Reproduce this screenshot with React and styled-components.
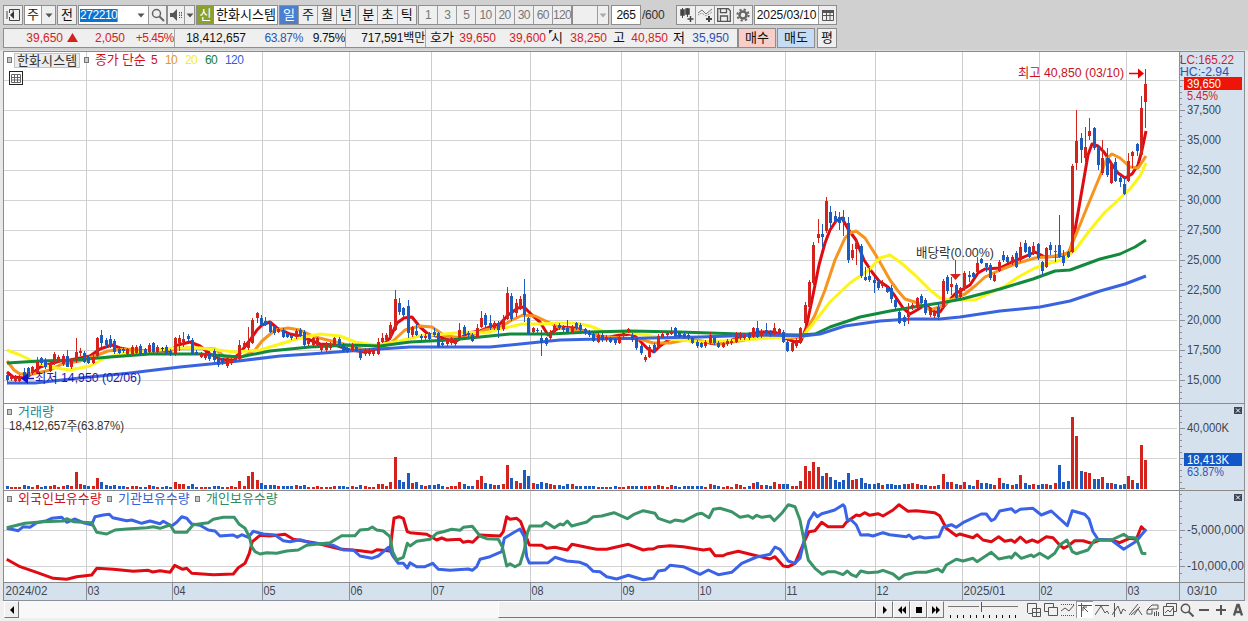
import React from 'react';
import styled, { createGlobalStyle } from 'styled-components';

const Global = createGlobalStyle`
  * { box-sizing: border-box; }
  body { margin: 0; background: #f0f0f0; font-family: 'Liberation Sans', 'Noto Sans CJK KR', sans-serif; font-size: 12px; color: #111; }
  button { font: inherit; color: inherit; padding: 0; }
`;

const RED = '#d4221c';
const BLUE = '#1d5cbe';

/* ---------- price data ---------- */

// Body range in thirds of a pixel, optionally followed by the wick range.
const CANDLES = [
  [280, 'b285-300 r290-297 r290-302 r290-302 b275-300:265-300 b265-290 r262-280 r247-280:232-280 b235-250 b240-262 r248-272 r222-250 r230-245 r228-252 b228-260:210-262 r240-262 r217-240:175-250 r212-220:203-228 b218-245 b230-248 r230-248 r175-228 b165-190:150-200 b180-195 b178-200:165-205 b183-215:178-222 b207-218 b207-213 r208-222 r200-222 r200-218 b198-222 b208-220 r195-215 b190-215 r200-215 k205-208 b200-220 b213-222 r175-222 r175-190:165-212 r178-185:157-200 b168-178 b180-220 b215-220 r222-230 r222-235 b218-238 b212-240 b235-255 b240-250 r235-258 r240-250 r230-240 r195-238:180-242 r188-200 r182-205:142-210 r120-188 r100-115:95-130 b115-135:105-137 b122-135:112-138 b128-155 b140-160 r148-155 b150-170 b160-170 b165-175 r152-172 b150-165 b155-195 r182-193'],
  [270, 'r205-225 r205-225 r225-240 r222-240 r222-235 r205-222 b207-225 b225-242 b235-245 r225-240 b230-242 b242-265 r240-252 r240-252 r240-252 r215-252:203-255 r205-215:190-220 r195-210 r165-205:155-210 r88-180:60-184 b100-125:85-135 b115-135 b108-190:90-205 r172-195 b182-195:160-198 b198-205 r198-205 b190-208 b185-195:175-200 b190-230 b218-225 r208-222 r205-220 r208-222 r180-205:158-210 b170-192 b188-195 b195-212 r175-200:163-204 r145-170:123-174 b135-165 b160-175:135-180 r160-175:153-180 b158-180:152-205 r150-178:135-182 r70-148:52-150 b78-148:68-154 r100-130:88-140 r88-115:78-120 b72-135:27-155 b145-190 r175-185 b180-184 b205-220:180-258 b205-222 r185-205 r168-185 b165-175 b170-180 b175-185:150-190 r170-185 b160-175 b165-180 b178-190 b185-195 b192-212 r195-215'],
  [180, 'b465-480 r470-480 b475-485 b478-490 r470-488 r458-468 r448-455 b465-480 b475-505 b497-520 r530-540 r500-530 b495-515 r467-500 r462-470 r458-466 r452-462:440-466 b445-467 b458-470 b462-470 b465-475 b475-488 b485-498 b490-500 r485-498 r465-490:455-494 b475-490 b488-500 r490-500 r482-492 r482-490 r460-485 r460-475 r465-475 b460-475 r445-470 b445-470:423-474 r452-468 b450-460:430-468 b455-465 r445-462:428-466 r448-460 b455-485 b485-512 r490-512 r480-498 r445-488 r375-428:365-440 r305-380 r195-310:185-315 r162-175:118-190 b162-172:132-200 r62-152:52-158 b95-130:78-140 b108-125:92-130 b112-128:95-150 b112-125:90-168 b128-240:110-250 r210-235:192-240 r188-208:180-255 b198-288 b290-300:262-302 b288-300:265-305 b300-308:290-338 b305-325 r305-318 b320-335 b325-358:315-370 b360-380:350-390 b395-428 b410-425:406-437 r395-412:370-433 r375-385 r355-380 b348-368 b360-400 r385-405 r395-408'],
  [90, 'b650-680:637-690 r573-650 b560-602:556-612 r582-592:560-615 b585-625 r595-620 r548-598 b555-562:542-575 b550-562 r520-545:500-550 b508-518 b520-530:518-545 b525-565 r555-572 r515-542 b495-510:482-515 b500-515 r500-520 b488-530 r470-510:455-516 b460-485:450-490 b472-500 r467-490:455-496 b463-505 b515-542:512-555 r475-530 b465-480:455-495 r483-487:465-515 b465-500:375-505 b498-518:480-528 b487-500 r228-485 r153-218:60-240 b143-180:128-220 r170-205:110-216 r122-137:85-150 b115-175 b172-225:168-240 r205-250:150-255 b205-255:175-262 r220-278 b215-272:205-276 b265-275:255-290 b283-312:262-316 r213-273:190-276 r187-197:184-235 b163-182:160-198 r53-195:18-200 r-19-36:-63-114'],
].flatMap(([base, list]) =>
  list.split(' ').map((item) => {
    const [, kind, a, b, hi, lo] = item.match(/^([rbk])(-?\d+)-(\d+)(?::(-?\d+)-(\d+))?$/);
    const at = (v) => Math.round(base + v / 3);
    return {
      color: kind === 'r' ? RED : kind === 'b' ? BLUE : '#333',
      top: at(+a), bottom: at(+b),
      high: at(hi === undefined ? +a - 5 : +hi), low: at(lo === undefined ? +b + 5 : +lo),
    };
  })
);

const VOLUMES = [
  3,2,2,2,4,3,2,4,2,3,3,4,2,3,4,3,17,5,4,3,3,11,7,4,3,4,3,3,2,3,3,2,2,4,3,2,2,3,2,7,5,5,3,5,2,2,2,2,3,3,2,2,3,2,8,3,13,17,9,6,
  4,4,4,3,3,3,3,4,3,4,2,2,3,2,2,2,3,3,3,2,3,2,4,3,2,2,5,5,3,7,32,9,7,16,6,7,4,3,4,4,5,3,2,3,3,7,5,3,3,9,13,6,5,4,4,5,24,11,8,6,
  19,13,6,5,7,6,5,4,4,3,5,5,3,3,3,3,3,2,2,2,2,3,2,2,3,3,3,3,3,3,3,4,3,2,4,3,2,3,3,3,3,3,2,5,4,3,2,3,2,5,4,2,3,6,7,4,4,3,7,5,
  5,5,3,3,8,23,18,27,22,13,16,12,9,7,9,16,9,10,11,6,5,5,6,4,5,5,4,4,5,5,6,5,4,4,3,3,4,15,7,7,5,4,7,4,3,9,6,6,5,4,11,6,5,4,5,14,
  6,4,5,4,5,5,4,6,24,7,8,72,53,18,17,16,10,10,12,6,6,5,4,5,13,9,6,44,29,
];

const barX = (i) => Math.round(6.5 + i * 4.314);

const AVERAGES = [
  ['#e00b12', '7,372 13,377 25,378 33,373 40,367 50,364 60,361 70,360 80,358 90,356 100,349 112,345 120,348 130,350 150,351 170,351 178,345 190,342 200,346 210,354 220,359 232,360 240,353 250,340 257,330 262,325 270,322 277,328 290,334 300,336 310,340 320,344 335,345 350,350 365,352 380,348 390,338 397,323 404,318 412,317 420,327 428,334 440,337 455,342 468,333 480,331 490,327 500,324 508,315 518,308 524,307 532,315 540,322 548,335 560,327 575,328 590,333 605,338 620,335 633,334 641,342 648,349 654,352 660,346 670,339 680,336 692,341 705,342 715,344 730,341 745,335 760,332 775,332 785,338 795,342 801,341 806,328 812,300 819,265 825,243 830,230 836,221 842,218 848,229 856,240 864,260 872,272 879,281 888,287 895,296 903,308 910,314 917,310 925,305 935,312 940,312 945,305 955,294 970,285 978,273 985,269 1000,268 1012,262 1024,257 1035,252 1045,257 1060,256 1070,252 1075,230 1083,184 1088,155 1092,144 1098,146 1104,152 1111,163 1118,173 1125,178 1132,174 1138,165 1142,150 1146,131'],
  ['#f7941d', '7,361 14,370 20,374 33,374 50,370 62,364 80,361 95,356 108,351 125,349 150,351 175,349 190,348 215,349 225,357 240,358 255,350 262,341 275,330 288,328 300,330 315,337 340,343 365,350 382,348 393,341 405,330 420,326 432,327 445,336 465,338 485,330 500,327 512,320 523,315 535,316 548,322 560,328 585,331 600,336 620,338 640,339 653,343 670,343 690,339 720,344 745,340 765,335 790,338 803,337 815,315 825,290 835,260 845,238 850,233 856,231 865,238 877,257 890,280 898,291 905,299 918,303 930,310 942,306 955,298 965,294 975,286 985,277 1000,270 1015,264 1035,258 1055,256 1068,253 1075,237 1088,205 1100,176 1107,158 1112,154 1120,158 1130,167 1138,168 1146,156'],
  ['#fdf51a', '7,350 20,355 35,362 50,367 70,370 90,366 105,358 120,354 150,351 175,348 200,348 235,352 260,350 280,344 300,338 320,334 340,336 355,342 375,345 395,342 420,336 445,334 465,332 485,333 505,328 522,324 540,324 560,323 575,323 590,326 605,332 625,332 645,335 670,339 700,342 740,340 770,338 803,336 812,325 830,302 850,283 870,269 880,258 890,255 900,262 915,275 930,290 940,298 950,300 975,300 990,293 1005,286 1020,276 1035,268 1050,263 1065,259 1075,250 1090,230 1105,212 1115,203 1130,189 1140,176 1146,163'],
  ['#118a3c', '7,363 40,361 75,360 110,357 150,354 200,354 240,357 270,351 310,347 350,345 380,346 410,342 450,340 490,336 510,334 550,334 590,332 630,331 680,332 740,334 800,335 815,334 830,327 860,317 890,311 920,306 940,303 962,299 1000,289 1033,279 1055,271 1070,270 1100,259 1120,254 1135,247 1146,240'],
  ['#3a63e0', '7,383 35,383 80,378 130,373 180,367 230,362 280,356 310,354 350,351 410,347 490,347 530,343 560,340 600,339 700,337 760,335 803,336 820,334 845,326 880,321 910,319 940,319 960,317 1000,311 1040,307 1070,301 1100,291 1125,284 1146,276'],
];

// Investor holdings: three spans per series, each in thirds of a pixel from its own left edge.
const SPANS = [0, 410, 828];
const HOLDINGS = [
  ['#e00b12', [
    '20,478 60,500 110,517 160,535 200,538 230,530 275,525 290,505 340,508 400,514 445,511 458,516 480,512 510,517 524,496 548,508 560,505 575,520 640,524 700,522 715,503 735,490 748,460 757,425 780,406 810,408 855,403 880,418 950,430 1020,447 1080,452 1115,457 1132,449 1170,453 1175,410 1182,355 1197,350 1210,355 1222,395',
    '0,398 50,403 80,420 95,414 110,420 150,418 160,427 175,424 188,427 210,405 270,408 280,395 290,350 300,358 320,355 332,365 345,400 358,435 395,436 410,445 435,442 472,450 486,433 540,444 560,448 590,448 655,433 700,450 715,447 730,447 745,440 780,437 820,440 880,450 900,447 915,467 940,467 950,462 985,454 1030,465 1080,477 1095,470 1120,498 1135,500 1155,490 1170,455 1185,420 1197,395 1215,392 1235,367',
    '0,380 45,380 55,367 85,345 95,347 110,338 125,346 150,341 165,348 195,330 213,314 240,334 265,332 320,338 335,347 355,385 385,407 395,402 435,413 447,404 465,420 490,425 512,410 530,424 550,420 560,427 577,411 595,427 613,420 630,427 655,410 675,413 695,435 707,445 720,438 740,422 765,422 790,430 815,420 850,420 875,428 905,415 925,418 940,380 952,392']],
  ['#3a63e8', [
    '20,385 55,392 70,380 90,382 110,368 140,362 155,355 185,352 200,367 225,357 250,368 275,374 285,350 310,345 328,343 338,353 380,362 395,360 425,370 450,363 480,371 490,364 515,378 530,367 545,350 560,355 575,372 600,376 625,390 645,393 660,408 700,405 712,412 725,404 745,412 760,394 790,402 825,405 850,422 870,425 900,419 930,428 1000,436 1030,450 1060,450 1080,468 1115,475 1135,468 1165,442 1180,470 1195,490 1210,490 1222,504',
    '0,488 20,500 45,500 68,490 85,508 120,511 175,507 187,511 200,500 210,478 240,470 275,455 283,415 310,398 330,387 343,410 350,470 358,489 415,488 435,472 470,483 510,487 530,495 550,514 570,515 590,530 620,537 655,526 700,539 730,535 745,513 765,510 780,496 820,500 870,523 895,510 925,524 965,517 995,490 1040,471 1080,463 1095,441 1110,448 1135,483 1155,490 1170,475 1185,410 1197,362 1212,338 1222,350 1235,341',
    '0,336 20,330 45,314 50,320 58,360 70,360 85,375 98,405 120,404 135,408 165,398 185,404 235,410 243,405 255,416 275,410 290,414 333,410 345,382 370,374 385,382 405,368 460,342 475,342 490,362 500,357 515,333 550,326 562,337 577,328 615,325 640,345 670,333 718,377 733,332 770,343 783,357 795,395 810,418 850,420 887,448 925,424 940,405 955,388']],
  ['#3a9467', [
    '20,383 75,370 130,365 190,363 200,356 220,365 275,368 290,397 320,402 345,390 380,387 440,383 460,380 480,385 510,375 524,397 560,397 580,374 625,368 640,358 670,352 703,352 718,373 735,385 748,410 755,440 765,455 780,462 800,458 830,460 860,453 895,450 920,436 990,428 1025,407 1065,407 1080,390 1105,388 1117,381 1130,390 1150,393 1170,410 1178,455 1190,480 1210,472 1222,430',
    '0,438 20,424 60,418 80,400 100,395 125,388 150,391 160,382 187,379 210,408 230,416 265,418 277,440 290,498 300,491 315,500 330,492 343,450 352,400 360,378 395,378 408,367 433,383 450,372 460,375 472,363 485,378 530,366 550,350 575,348 612,338 652,356 670,344 700,332 735,340 745,355 780,367 795,360 820,364 860,343 875,340 897,353 910,328 930,325 965,335 990,352 1015,347 1028,355 1040,346 1055,352 1080,348 1093,362 1115,340 1135,314 1155,320 1170,360 1180,410 1195,480 1215,505 1237,523',
    '0,515 20,515 45,524 58,513 70,524 85,530 98,513 120,518 150,516 165,511 195,522 213,537 230,524 265,517 295,517 330,507 343,516 355,495 385,478 405,483 435,475 447,485 490,457 512,477 545,470 550,474 562,459 580,475 610,465 617,470 635,460 660,475 680,460 695,435 717,420 733,455 745,461 780,450 800,420 850,420 887,403 900,412 925,414 935,440 942,460 955,461']],
].map(([color, spans]) => [color, spans.map((s, k) => s.split(' ').map((p) => {
  const [x, y] = p.split(',').map(Number);
  return `${(SPANS[k] + x / 3).toFixed(1)},${(400 + y / 3).toFixed(1)}`;
}).join(' ')).join(' ')]);

const MONTHS = [
  [4, '2024/02', 42], [86, '03', 12], [172, '04', 12], [262, '05', 12], [349, '06', 12], [431, '07', 12], [530, '08', 12], [621, '09', 12],
  [698, '10', 12], [785, '11', 11], [875, '12', 12], [962, '2025/01', 42], [1039, '02', 12], [1126, '03', 12],
];
const AXIS_X = 1179;

/* ---------- layout ---------- */

const Window = styled.div`
  width: 1248px; height: 621px; display: flex; flex-direction: column; overflow: hidden;
  background: #e8e8e8; padding: 0 3px;
`;
const Header = styled.header`
  height: 51px; flex: none; margin: 0 -3px; padding: 5px 3px 0; background: #d0d0d0; border-bottom: 1px solid #dedede;
`;
const ToolRow = styled.div`
  display: flex; align-items: center; height: 20px; white-space: nowrap;
`;
const Group = styled.div`
  display: flex; height: 20px; width: ${(p) => p.$w}px; margin-right: ${(p) => p.$gap || 0}px;
  border: 1px solid #8e8e8e; background: ${(p) => p.$bg || '#efefef'}; align-items: stretch;
`;
const Cell = styled.button`
  display: flex; align-items: center; justify-content: center; flex: ${(p) => (p.$w ? 'none' : 1)}; width: ${(p) => (p.$w ? p.$w + 'px' : 'auto')};
  min-width: 0; border: 0; background: ${(p) => p.$bg || 'transparent'}; color: ${(p) => p.$color || '#111'};
  font-size: ${(p) => p.$size || 13}px; letter-spacing: ${(p) => p.$ls || 0}px; line-height: 18px;
  & + & { border-left: 1px solid #9b9b9b; }
`;
const Selected = styled.span`background: #0a74d0; color: #fff; letter-spacing: -0.45px; height: 13px; line-height: 13px; border-right: 1px solid #e8883a;`;
const CodeInput = styled.div`
  display: flex; align-items: center; flex: 1; background: #fff; padding-left: 1px; font-size: 12px;
`;
const StockName = styled.div`
  display: flex; align-items: center; flex: 1; background: #fff; padding-left: 2px; font-size: 13px; letter-spacing: 0.05px; overflow: hidden; line-height: 18px;
`;
const Plain = styled.span`width: ${(p) => p.$w}px; padding-left: 1px; font-size: 12px; letter-spacing: -0.25px; color: #333;`;

const QuoteRow = styled(ToolRow)`margin-top: 3px;`;
const Quotes = styled.div`
  display: flex; align-items: center; width: 735px; height: 20px; border: 1px solid #8e8e8e; background: #efefef; line-height: 18px;
`;
const Quote = styled.span`
  position: relative; width: ${(p) => p.$w}px; flex: none; text-align: right; color: ${(p) => p.$color || '#111'}; font-size: ${(p) => (p.$ko ? 13 : 12)}px;
  letter-spacing: ${(p) => p.$ls ?? 0}px; border-left: ${(p) => (p.$rule ? '1px solid #aaa' : 0)}; height: 18px;
`;
const Corner = styled.i`
  position: absolute; left: 3px; top: 1px; border: 2px solid; border-color: #333 transparent transparent #333;
`;

const Chart = styled.div`
  display: flex; flex-direction: column; height: 550px; flex: none; background: #fff; border-top: 1px solid #8a8a8a; border-left: 1px solid #8a8a8a;
`;
const Pane = styled.div`position: relative; height: ${(p) => p.$h}px; flex: none; svg { display: block; }`;
const Legend = styled.div`
  position: absolute; left: 3px; top: ${(p) => p.$top}px; display: flex; align-items: center; height: 16px; font-size: 13px; line-height: 16px; white-space: pre;
`;
const Handle = styled.i`width: 5px; height: 6px; border: 1px solid #777; background: #c9c9c9; margin-right: ${(p) => p.$gap}px;`;
const Label = styled.span`
  color: ${(p) => p.$color}; width: ${(p) => p.$w}px; letter-spacing: ${(p) => p.$ls || 0}px; font-size: ${(p) => (p.$num ? 12 : 13)}px;
`;
const NameTag = styled(Label)`background: #ececec; border: 1px solid #c4c4c4; height: 15px; line-height: 13px; margin-right: 4px; padding-left: 2px;`;
const GridButton = styled.button`
  position: absolute; left: 5px; top: 19px; width: 14px; height: 14px; border: 1px solid #222; background: #fff; display: flex; align-items: center; justify-content: center;
`;
const CloseMark = styled.button`
  position: absolute; right: 3px; top: 3px; width: 8px; height: 7px; border: 0; background: #3d4654; display: flex; align-items: center; justify-content: center;
`;

const Footer = styled.div`display: flex; flex: none; height: 20px; margin: 0 -3px; padding-left: 4px; background: #f0f0f0; align-items: stretch;`;
const ScrollTrack = styled.div`display: flex; width: 872px; height: 17px; background: #f8f8f8;`;
const Raised = styled.button`
  width: ${(p) => p.$w}px; height: 17px; border: 1px solid; border-color: #fff #777 #777 #fff; background: #f0f0f0; display: flex; align-items: center; justify-content: center;
`;
const Gap = styled.span`flex: 1;`;
const Slider = styled.div`width: 70px; margin: 0 7px 0 4px;`;
const Tools = styled.div`display: flex; height: 17px; align-items: center;`;
const Tool = styled.button`
  width: ${(p) => p.$w || 17}px; height: 17px; border: 0; background: ${(p) => (p.$on ? '#fff' : 'transparent')}; display: flex; align-items: center; justify-content: center;
  ${(p) => p.$on && 'box-shadow: inset 1px 1px #999;'}
`;

/* ---------- drawings ---------- */

const Icon = ({ w = 14, h = 14, d, fill = 'none', stroke = '#555', sw = 1, children }) => (
  <svg width={w} height={h} viewBox={`0 0 ${w} ${h}`} fill={fill} stroke={stroke} strokeWidth={sw}>{d && <path d={d} />}{children}</svg>
);
const Down = ({ color = '#555' }) => <Icon w={8} h={5} d="M0.5 0.5h7L4 4.5z" fill={color} stroke="none" />;

const T = ({ x, y, w, color = '#3f4650', size = 13, children }) => (
  <text x={x} y={y} textLength={w} lengthAdjust="spacingAndGlyphs" fill={color} fontSize={size}>{children}</text>
);

const Grid = ({ top, bottom, rows }) => (
  <g shapeRendering="crispEdges">
    <rect x={AXIS_X} y={top} width={66} height={bottom - top} fill="#d6e1ee" />
    {rows.map((y) => <rect key={y} x={4} y={y} width={1173} height={1} fill="#d3d3d3" />)}
    {MONTHS.slice(1).map(([x]) => <rect key={x} x={x} y={top} width={1} height={bottom - top} fill="#cdcdcd" />)}
    <rect x={AXIS_X} y={top} width={1} height={bottom - top} fill="#8a8f98" />
    <rect x={1244} y={top} width={1} height={bottom - top} fill="#8a8f98" />
    <rect x={4} y={bottom - 1} width={1241} height={1} fill="#8a8a8a" />
  </g>
);
const Ticks = ({ from, to, step, rows }) => (
  <g shapeRendering="crispEdges" fill="#8a8f98">
    {Array.from({ length: Math.floor((to - from) / step) + 1 }, (_, i) => <rect key={i} x={AXIS_X} y={Math.round(from + i * step)} width={3} height={1} />)}
    {rows.map((y) => <rect key={y} x={AXIS_X} y={y} width={6} height={1} />)}
  </g>
);
const Trace = ({ color, points }) => <polyline points={points} fill="none" stroke={color} strokeWidth="3" strokeLinejoin="round" />;

const PRICE_ROWS = Array.from({ length: 11 }, (_, i) => 80 + i * 30);

function PricePane() {
  return (
    <Pane $h={352}>
      <svg width="1241" height="352" viewBox="4 52 1241 352">
        <Grid top={52} bottom={404} rows={PRICE_ROWS} />
        <Ticks from={56} to={398} step={6} rows={PRICE_ROWS} />
        {AVERAGES.map(([c, pts]) => <Trace key={c} color={c} points={pts} />)}
        <g shapeRendering="crispEdges">
          {CANDLES.map((c, i) => (
            <g key={i} fill={c.color}>
              <rect x={barX(i)} y={c.high} width={1} height={c.low - c.high} />
              <rect x={barX(i) - 1} y={c.top} width={3} height={Math.max(1, c.bottom - c.top)} />
            </g>
          ))}
        </g>
        {PRICE_ROWS.slice(1).map((y, i) => (
          <T key={y} x={1187} y={y + 4} w={34}>{(37500 - i * 2500).toLocaleString('en-US')}</T>
        ))}
        <T x={1180} y={64} w={54} color="#cc1f2c">LC:165.22</T>
        <T x={1180} y={76} w={49} color="#2456b8">HC:-2.94</T>
        <T x={1187} y={100} w={31} color="#cc1f2c">5.45%</T>
        <rect x={1184} y={77} width={58} height={13} fill="#ee1408" />
        <T x={1187} y={88} w={34} color="#fff">39,650</T>
        <T x={1018} y={77} w={106} color="#c8101e">최고 40,850 (03/10)</T>
        <path d="M1129 73.5h10" stroke="#e00" strokeWidth="1.5" />
        <path d="M1138 68.5l6 5-6 5z" fill="#e00" />
        <T x={916} y={257} w={78} color="#333">배당락(0.00%)</T>
        <path d="M955.5 260v14" stroke={RED} />
        <path d="M950 274h11l-5.500 6z" fill={RED} />
        <T x={35} y={382} w={106} color="#1a1ab0">최저 14,950 (02/06)</T>
        <path d="M26 378.500h8" stroke="#1414d0" strokeWidth="1.500" />
        <path d="M28 373v11l-7-5.500z" fill="#1414d0" />
      </svg>
      <Legend $top={0}>
        <Handle $gap={2} />
        <NameTag $w={66} $color="#333" $ls={0.1}>한화시스템</NameTag>
        <Handle $gap={6} />
        <Label $w={56} $color="#d0101e" $ls={-0.2}>종가 단순</Label>
        <Label $num $w={14} $color="#d0101e">5</Label>
        <Label $num $w={20} $color="#e8981c" $ls={-0.6}>10</Label>
        <Label $num $w={20} $color="#f6ee1c" $ls={-0.6}>20</Label>
        <Label $num $w={20} $color="#128038" $ls={-0.6}>60</Label>
        <Label $num $w={24} $color="#3260d8" $ls={-0.6}>120</Label>
      </Legend>
      <GridButton aria-label="table"><Icon w={10} h={9} stroke="#666" d="M.5 .5h9v8h-9zM.5 3.500h9M.5 6h9M3.500 .5v8M6.500 .5v8" /></GridButton>
    </Pane>
  );
}

const Close = () => <CloseMark aria-label="close"><Icon w={6} h={5} stroke="#fff" d="M1 .5l4 4M5 .5l-4 4" /></CloseMark>;

function VolumePane() {
  return (
    <Pane $h={87}>
      <svg width="1241" height="87" viewBox="4 404 1241 87">
        <Grid top={404} bottom={491} rows={[428, 458]} />
        <Ticks from={410} to={488} step={6} rows={[428, 458, 488]} />
        <g shapeRendering="crispEdges">
          {VOLUMES.map((v, i) => <rect key={i} x={barX(i) - 1} y={489 - v} width={3} height={v} fill={CANDLES[i]?.color === RED ? RED : BLUE} />)}
        </g>
        <T x={1187} y={432} w={42}>40,000K</T>
        <T x={1187} y={476} w={37} color="#2f55b8">63.87%</T>
        <rect x={1184} y={453} width={58} height={13} fill="#1257c8" />
        <T x={1187} y={464} w={42} color="#fff">18,413K</T>
        <T x={9} y={430} w={115} color="#333">18,412,657주(63.87%)</T>
      </svg>
      <Legend $top={0}>
        <Handle $gap={6} />
        <Label $w={60} $color="#25868c">거래량</Label>
      </Legend>
      <Close />
    </Pane>
  );
}

function HoldingPane() {
  return (
    <Pane $h={92}>
      <svg width="1241" height="92" viewBox="4 491 1241 92">
        <Grid top={491} bottom={583} rows={[530, 566]} />
        <Ticks from={494} to={580} step={7.200} rows={[530, 566]} />
        {HOLDINGS.map(([c, pts]) => <Trace key={c} color={c} points={pts} />)}
        <T x={1187} y={534} w={57}>-5,000,000</T>
        <T x={1187} y={570} w={57}>-10,000,00</T>
      </svg>
      <Legend $top={0}>
        <Handle $gap={6} />
        <Label $w={89} $color="#d0101e">외국인보유수량</Label>
        <Handle $gap={6} />
        <Label $w={77} $color="#3562d6">기관보유수량</Label>
        <Handle $gap={6} />
        <Label $w={80} $color="#2f8a60">개인보유수량</Label>
      </Legend>
      <Close />
    </Pane>
  );
}

function TimeAxis() {
  return (
    <Pane $h={18}>
      <svg width="1241" height="18" viewBox="4 583 1241 18">
        <rect x={4} y={583} width={1241} height={18} fill="#d6e1ee" />
        <g shapeRendering="crispEdges" fill="#8a8f98">
          {MONTHS.slice(1).map(([x]) => <rect key={x} x={x} y={583} width={1} height={17} />)}
          <rect x={AXIS_X} y={583} width={1} height={17} />
          <rect x={1244} y={583} width={1} height={17} />
          <rect x={4} y={600} width={1241} height={1} />
        </g>
        {MONTHS.map(([x, t, w]) => <T key={x} x={x + 1.500} y={595} w={w}>{t}</T>)}
        <T x={1187} y={595} w={30}>03/10</T>
      </svg>
    </Pane>
  );
}

function Toolbar() {
  return (
    <ToolRow>
      <Group $w={20} $gap={1}><Cell><Icon w={14} h={12} stroke="#444" d="M3.500 4V.5h10v11h-10V8M7 .5v2M1 2v8"><path d="M4 6l4-4v8z" fill="#333" stroke="none" /></Icon></Cell></Group>
      <Group $w={32} $gap={1} $bg="#fff"><Cell>주</Cell><Cell $w={14} $bg="#efefef"><Down /></Cell></Group>
      <Group $w={20} $gap={1}><Cell>전</Cell></Group>
      <Group $w={89} $gap={0}>
        <CodeInput><Selected>272210</Selected></CodeInput>
        <Cell $w={15} $bg="#fff"><Down /></Cell>
        <Cell $w={18}><Icon stroke="#666" sw={1.500}><circle cx="5.500" cy="5.500" r="4" /><path d="M8.500 8.500l4.500 4.500" strokeWidth="2" /></Icon></Cell>
      </Group>
      <Group $w={28} $gap={1}>
        <Cell $w={16}><Icon w={13} h={12} d="M0 4h3l4-4v12l-4-4H0z" fill="#555" stroke="none"><path d="M9.500 3v6M11.500 3v6" stroke="#555" strokeDasharray="1.500 1" /></Icon></Cell>
        <Cell><Down /></Cell>
      </Group>
      <Group $w={82} $gap={1}>
        <Cell $w={17} $bg="#8aa12e" $color="#fff">신</Cell>
        <StockName>한화시스템</StockName>
      </Group>
      <Group $w={77} $gap={2}><Cell $bg="#4a7fd0" $color="#fff">일</Cell><Cell>주</Cell><Cell>월</Cell><Cell>년</Cell></Group>
      <Group $w={59} $gap={1}><Cell>분</Cell><Cell>초</Cell><Cell>틱</Cell></Group>
      <Group $w={154} $gap={0}>
        {[1, 3, 5, 10, 20, 30, 60, 120].map((n) => <Cell key={n} $color="#777" $size={12} $ls={-0.7}>{n}</Cell>)}
      </Group>
      <Group $w={37} $gap={2}><Cell $w={24} /><Cell><Down color="#aaa" /></Cell></Group>
      <Group $w={30} $bg="#fff"><Cell $size={12} $ls={-0.4}>265</Cell></Group>
      <Plain $w={35}>/600</Plain>
      <Group $w={77} $gap={1}>
        <Cell><Icon w={15} h={14} stroke="#444" d="M3.500 0v10M8.500 0v9"><path d="M2 2h3v5H2zM7 1h3v5H7zM11.500 8v6M8.500 11h6" fill="#444" strokeWidth="1.500" /></Icon></Cell>
        <Cell><Icon w={15} h={14} stroke="#777" d="M0 5l4-3 4 4 6-5"><path d="M0 7l4-2 4 3 6-4" strokeDasharray="1 1" /><path d="M11 8v6M8 11h6" stroke="#444" strokeWidth="2" /></Icon></Cell>
        <Cell><Icon stroke="#555" d="M.7 .7h10.600l2 2v10.600H.7zM3.500 .7v4h6v-4M3.500 13V8h7v5" sw={1.300} /></Cell>
        <Cell><Icon stroke="#666" sw={2.500}><circle cx="7" cy="7" r="3.500" /><circle cx="7" cy="7" r="5.600" strokeWidth="2" strokeDasharray="2.200 2.200" /></Icon></Cell>
      </Group>
      <Group $w={83} $bg="#fff"><Cell $w={63} $size={12} $ls={-0.05}>2025/03/10</Cell><Cell $bg="#efefef"><Icon w={12} h={11} stroke="#555" d="M.5 .5h11v10H.5zM.5 5.500h11M4.500 2v8M8 2v8"><path d="M0 1.500h12" strokeWidth="3" /></Icon></Cell></Group>
    </ToolRow>
  );
}

function QuoteBar() {
  return (
    <QuoteRow>
      <Quotes>
        <Quote $w={59} $color={RED}>39,650</Quote>
        <Quote $w={15}><Icon w={11} h={9} d="M5.500 0l5.500 9H0z" fill={RED} stroke="none" /></Quote>
        <Quote $w={47} $color={RED}>2,050</Quote>
        <Quote $w={49} $color={RED} $ls={-0.45}>+5.45%</Quote>
        <Quote $w={72} $rule>18,412,657</Quote>
        <Quote $w={57} $color="#2a55b5" $ls={-0.35}>63.87%</Quote>
        <Quote $w={42} $ls={-0.35}>9.75%</Quote>
        <Quote $w={80} $rule $ls={-0.2}>717,591백만</Quote>
        <Quote $w={29} $rule $ko>호가</Quote>
        <Quote $w={42} $color={RED}>39,650</Quote>
        <Quote $w={50} $color={RED}>39,600</Quote>
        <Quote $w={17} $ko><Corner />시</Quote>
        <Quote $w={44} $color={RED}>38,250</Quote>
        <Quote $w={18} $ko>고</Quote>
        <Quote $w={43} $color={RED}>40,850</Quote>
        <Quote $w={17} $ko>저</Quote>
        <Quote $w={44} $color="#2a4fb0">35,950</Quote>
      </Quotes>
      <Group $w={38} $gap={1} $bg="#f8cfc8"><Cell>매수</Cell></Group>
      <Group $w={38} $gap={2} $bg="#c6dcf4"><Cell>매도</Cell></Group>
      <Group $w={20}><Cell>평</Cell></Group>
    </QuoteRow>
  );
}

function BottomBar() {
  return (
    <Footer>
      <ScrollTrack>
        <Raised $w={15}><Icon w={4} h={8} d="M4 0v8L0 4z" fill="#000" stroke="none" /></Raised>
        <Gap />
        <Raised $w={378} />
      </ScrollTrack>
      <Raised $w={17}><Icon w={4} h={8} d="M0 0v8l4-4z" fill="#000" stroke="none" /></Raised>
      <Raised $w={17}><Icon w={8} h={8} d="M4 0v8L0 4zM8 0v8L4 4z" fill="#000" stroke="none" /></Raised>
      <Raised $w={17}><Icon w={6} h={6} d="M0 0h6v6H0z" fill="#000" stroke="none" /></Raised>
      <Raised $w={17}><Icon w={8} h={8} d="M0 0v8l4-4zM4 0v8l4-4z" fill="#000" stroke="none" /></Raised>
      <Slider>
        <svg width="70" height="17" shapeRendering="crispEdges">
          <rect y="5" width="70" height="1" fill="#777" />
          <rect x="31" y="1" width="3" height="9" fill="#f0f0f0" /><rect x="33" y="1" width="1" height="10" fill="#555" />
          {Array.from({ length: 11 }, (_, i) => <rect key={i} x={2 + i * 6.500} y="14" width="1" height="3" fill="#111" />)}
        </svg>
      </Slider>
      <Tools>
        <Tool><Icon d="M5 10.500H1.500l-1-1v-9h9V5M5.500 5.500h8v8h-8zM9.500 5.500v8M5.500 9.500h8" /></Tool>
        <Tool><Icon d="M4 8.500H.5v-8h9V4M4.500 4.500h9v8h-9z" /></Tool>
        <Tool><Icon d="M0 8l4-3 4 3 5-6"><path d="M0 1.500h14M0 12.500h14" strokeDasharray="1 1" /></Icon></Tool>
        <Tool $on><Icon d="M0 2.500h14M3.500 0v14M5 4l5 5M5 8V4h4" /></Tool>
        <Tool><Icon d="M0 2.500h14M0 12l6-9 4 7 2-2 2 3" /></Tool>
        <Tool><Icon d="M2.500 0v14M0 12l2-3 4-6 3 8 2-5 3 2" /></Tool>
        <Tool><Icon d="M0 12L9 1M2 12l9-8M5 12l4-6 4 6" /></Tool>
        <Tool><Icon d="M1 7l5-5h6v4H6zM1 7v4h5V6M8.500 9v4M10.500 8v5M12.500 9v4" /></Tool>
        <Tool><Icon d="M3.500 3V.5h10v8H11M.5 3.500h10v9H.5zM2 10l3-3 2 2 3-4" /></Tool>
        <Tool><Icon sw={1.400}><circle cx="5.500" cy="5.500" r="4.200" /><path d="M8.500 8.500l5 5" strokeWidth="2" /></Icon></Tool>
        <Tool><Icon d="M2 7h10" sw={2} /></Tool>
        <Tool><Icon d="M2 7h10M7 2v10" sw={2} /></Tool>
        <Tool><Icon d="M3 12.500L6.400 2h1.200L11 12.500M4.500 9h5" sw={2.400} /></Tool>
      </Tools>
    </Footer>
  );
}

export default function App() {
  return (
    <Window>
      <Global />
      <Header>
        <Toolbar />
        <QuoteBar />
      </Header>
      <Chart>
        <PricePane />
        <VolumePane />
        <HoldingPane />
        <TimeAxis />
      </Chart>
      <BottomBar />
    </Window>
  );
}
